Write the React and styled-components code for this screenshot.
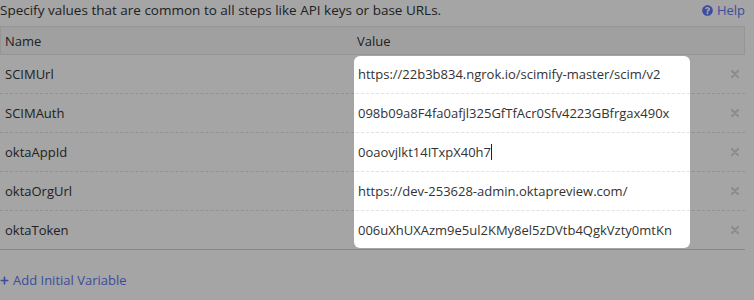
import React from 'react';
import styled, { createGlobalStyle } from 'styled-components';
import { FaQuestionCircle, FaPlus } from 'react-icons/fa';

const GlobalStyle = createGlobalStyle`
  html, body {
    margin: 0;
    background: #fff;
    overflow: hidden;
  }
  body {
    font-family: "Open Sans", "Liberation Sans", sans-serif;
    font-size: 13px;
    color: #333;
  }
`;

const Page = styled.div`
  width: 754px;
  height: 300px;
  position: relative;
`;

const Intro = styled.div`
  display: flex;
  justify-content: space-between;
  align-items: center;
  height: 20px;
  margin-bottom: 6px;
  padding-right: 9px;
  font-size: 13.5px;
`;

const Link = styled.a`
  display: inline-flex;
  align-items: center;
  gap: 4px;
  color: #5d76f6;
  font-size: 13px;
  text-decoration: none;
  cursor: pointer;
  svg {
    width: ${p => p.$icon || 10}px;
    height: ${p => p.$icon || 10}px;
  }
`;

const Table = styled.div`
  position: relative;
  width: 745px;
`;

const Grid = styled.div`
  display: grid;
  grid-template-columns: 354px 336px 1fr;
  align-items: center;
`;

const Head = styled(Grid)`
  height: 27px;
  background: #f8f8f8;
  border: 1px solid #e6e6e6;
`;

const HeadCell = styled.div`
  padding-left: ${p => p.$pad}px;
  color: #333;
`;

const Row = styled(Grid)`
  height: 38px;
  border-bottom: 1px ${p => (p.$last ? 'solid #cfcfcf' : 'dashed #e2e2e2')};
`;

const NameCell = styled.div`
  padding-left: 5px;
`;

const ValueCell = styled.div`
  padding-left: 4px;
  white-space: nowrap;
  overflow: hidden;
`;

const Caret = styled.span`
  display: inline-block;
  width: 1px;
  height: 16px;
  background: #222;
  vertical-align: -3px;
`;

const Remove = styled.div`
  display: flex;
  justify-content: flex-end;
  padding-right: 6px;
  color: #d9d9d9;
`;

const Spotlight = styled.div`
  position: absolute;
  left: 354px;
  top: 30px;
  width: 336px;
  height: 192px;
  border-radius: 6px;
  box-shadow: 0 0 0 2000px rgba(0, 0, 0, 0.353);
  pointer-events: none;
`;

const Footer = styled.div`
  margin-top: 20px;
  height: 20px;
  display: flex;
  align-items: center;
`;

const rows = [
  ['SCIMUrl', 'https://22b3b834.ngrok.io/scimify-master/scim/v2'],
  ['SCIMAuth', '098b09a8F4fa0afjl325GfTfAcr0Sfv4223GBfrgax490x'],
  ['oktaAppId', '0oaovjlkt14ITxpX40h7', true],
  ['oktaOrgUrl', 'https://dev-253628-admin.oktapreview.com/'],
  ['oktaToken', '006uXhUXAzm9e5ul2KMy8el5zDVtb4QgkVzty0mtKn'],
];

function Cross() {
  return (
    <svg width="8" height="8" viewBox="0 0 8 8">
      <path d="M1 1L7 7M7 1L1 7" stroke="currentColor" strokeWidth="2.2" strokeLinecap="round" />
    </svg>
  );
}

export default function App() {
  return (
    <Page>
      <GlobalStyle />
      <Intro>
        <span>Specify values that are common to all steps like API keys or base URLs.</span>
        <Link $icon={11}><FaQuestionCircle /> Help</Link>
      </Intro>
      <Table>
        <Head>
          <HeadCell $pad={4}>Name</HeadCell>
          <HeadCell $pad={2}>Value</HeadCell>
          <div />
        </Head>
        {rows.map(([name, value, focused], i) => (
          <Row key={name} $last={i === rows.length - 1}>
            <NameCell>{name}</NameCell>
            <ValueCell>{value}{focused && <Caret />}</ValueCell>
            <Remove><Cross /></Remove>
          </Row>
        ))}
        <Spotlight />
      </Table>
      <Footer>
        <Link $icon={9}><FaPlus /> Add Initial Variable</Link>
      </Footer>
    </Page>
  );
}
